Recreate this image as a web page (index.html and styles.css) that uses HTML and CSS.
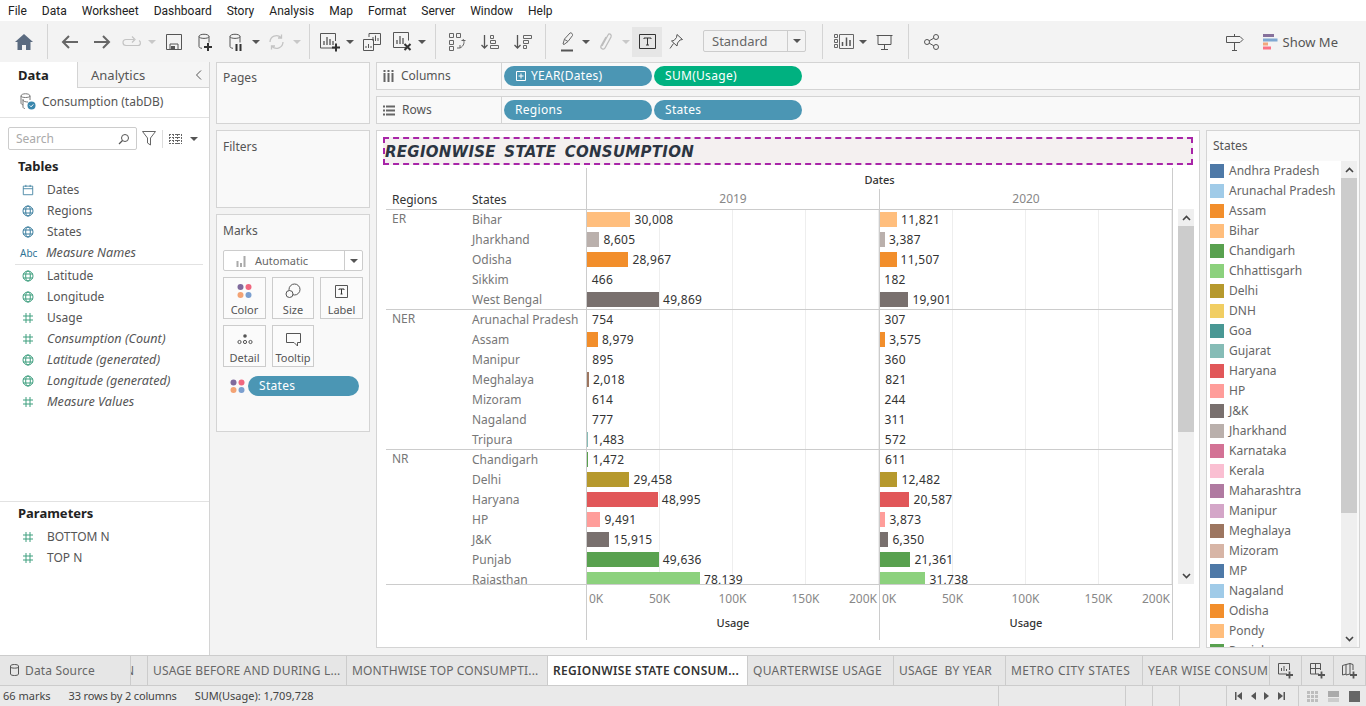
FILE: index.html
```html
<!DOCTYPE html>
<html lang="en">
<head>
  <meta charset="UTF-8">
  <title>Tableau - Regionwise State Consumption</title>
  <link rel="stylesheet" href="styles.css">
</head>
<body>
  <svg class="defs" width="0" height="0">
    <symbol id="globe" viewBox="0 0 12 12"><g fill="none" stroke="currentColor"><circle cx="6" cy="6" r="5"/><ellipse cx="6" cy="6" rx="2.3" ry="5"/><path d="M1 4h10M1 8h10"/></g></symbol>
    <symbol id="hash" viewBox="0 0 12 12"><path d="M4 1v10M8 1v10M1 4h10M1 8h10" fill="none" stroke="currentColor"/></symbol>
    <symbol id="db" viewBox="0 0 20 20"><path d="M4 4.500c0-3 10-3 10 0v6M4 4.500v10c0 1 1 1.500 3 1.800M4 4.500c0 2.500 10 2.500 10 0" fill="none" stroke="#555"/></symbol>
  </svg>

  <nav class="menubar">
    <span>File</span><span>Data</span><span>Worksheet</span><span>Dashboard</span><span>Story</span><span>Analysis</span><span>Map</span><span>Format</span><span>Server</span><span>Window</span><span>Help</span>
  </nav>

  <div class="toolbar">
    <span class="tool w32"><svg width="18" height="16" viewBox="0 0 18 16"><path d="M9 0 0 8h2.500v8h4.500v-5h4v5h4.500V8H18z" fill="#5b6b80"/></svg></span>
    <i class="sep first"></i>
    <span class="tool w32"><svg width="18" height="14" viewBox="0 0 18 14"><path d="M17 7H2M8 1 2 7l6 6" fill="none" stroke="#666" stroke-width="2"/></svg></span>
    <span class="tool w32"><svg width="18" height="14" viewBox="0 0 18 14"><path d="M1 7h15M10 1l6 6-6 6" fill="none" stroke="#666" stroke-width="2"/></svg></span>
    <span class="tool w28"><svg width="20" height="12" viewBox="0 0 20 12"><path d="M12 3.500H4c-4 0-4 6 0 6h12c3 0 3-4 1-5M10 .5l3 3-3 3" fill="none" stroke="#c4c4c4" stroke-width="1.200"/></svg></span>
    <span class="tool w12"><i class="caret light"></i></span>
    <span class="tool w32"><svg width="16" height="16" viewBox="0 0 16 16"><path d="M.5.5h15v15H.5zM4 15.500V10h8v5.500" fill="none" stroke="#555"/><rect x="5" y="12" width="4" height="3" fill="#555"/></svg></span>
    <span class="tool w30"><svg width="20" height="20" viewBox="0 0 20 20"><use href="#db"/><path d="M9 15h8M13 11v8" stroke="#333" stroke-width="2"/></svg></span>
    <span class="tool w32"><svg width="20" height="20" viewBox="0 0 20 20"><use href="#db"/><path d="M10.500 12v7M14.500 12v7" stroke="#333" stroke-width="2"/></svg></span>
    <span class="tool w8"><i class="caret"></i></span>
    <span class="tool w32"><svg width="17" height="16" viewBox="0 0 17 16"><path d="M2 8a6.500 6.500 0 0 1 11-4.500M15 8a6.500 6.500 0 0 1-11 4.500M13.500.5v3.500H10M3.500 15.500V12H7" fill="none" stroke="#c4c4c4" stroke-width="1.300"/></svg></span>
    <span class="tool w10"><i class="caret light"></i></span>
    <i class="sep"></i>
    <span class="tool w30"><svg width="22" height="20" viewBox="0 0 22 20"><path d="M15 16H.5V1.500h15V9" fill="none" stroke="#555"/><path d="M4 13V9M7 13V5M10 13V7M13 13V9" stroke="#555" stroke-width="1.300"/><path d="M12 15.500h8M16 11.500v8" stroke="#333" stroke-width="2"/></svg></span>
    <span class="tool w8"><i class="caret"></i></span>
    <span class="tool w36"><svg width="18" height="18" viewBox="0 0 18 18"><path d="M6 4V.5h11.500v11H11M.5 6.500h10v11H.5z" fill="#f3f3f3" stroke="#555"/><path d="M10 8V4M12.500 8V2.500M15 8V5M3 15v-2M5.500 15v-4M8 15v-2" stroke="#555"/></svg></span>
    <span class="tool w26"><svg width="20" height="20" viewBox="0 0 20 20"><path d="M13 15.500H.5V.5h15v8" fill="none" stroke="#555"/><path d="M4 12V8M7 12V4M10 12V6" stroke="#555" stroke-width="1.300"/><path d="m11.500 12 6 6M17.500 12l-6 6" stroke="#333" stroke-width="2"/></svg></span>
    <span class="tool w12"><i class="caret"></i></span>
    <i class="sep"></i>
    <span class="tool w30"><svg width="17" height="18" viewBox="0 0 17 18"><path d="M.5.5h4v4h-4zM7.500.5h4v4h-4zM.5 7.500h4v4h-4zM12.500 7.500h4M.5 13.500h4v4h-4z" fill="none" stroke="#666"/><path d="M14 6c2 3 1 7-3 9M8 15l3 0 0-3" fill="none" stroke="#666"/></svg></span>
    <span class="tool w36"><svg width="18" height="16" viewBox="0 0 18 16"><path d="M3.500 1v13M.5 11l3 3 3-3" fill="none" stroke="#555" stroke-width="1.300"/><path d="M9.500 1.500h3v3h-3zM9.500 6.500h5v3h-5zM9.500 11.500h8v3h-8z" fill="none" stroke="#666"/></svg></span>
    <span class="tool w30"><svg width="18" height="16" viewBox="0 0 18 16"><path d="M3.500 1v13M.5 11l3 3 3-3" fill="none" stroke="#555" stroke-width="1.300"/><path d="M9.500 1.500h8v3h-8zM9.500 6.500h5v3h-5zM9.500 11.500h3v3h-3z" fill="none" stroke="#666"/></svg></span>
    <i class="sep mid"></i>
    <span class="tool w30"><svg width="14" height="20" viewBox="0 0 14 20"><path d="m3 12 1.500-5L10 1c1-1 3 1 2.500 2.500L8 9.500l-4 3zM4.500 7.500l3.500 2" fill="none" stroke="#666"/><path d="M1 18.500h12" stroke="#555" stroke-width="2"/></svg></span>
    <span class="tool w8"><i class="caret"></i></span>
    <span class="tool w30"><svg width="15" height="19" viewBox="0 0 15 19"><path d="M4 14 10 3c1-2 4-1 3 2L7 16c-1 2-5 1-4-2L8 5" fill="none" stroke="#bdbdbd" stroke-width="1.300"/></svg></span>
    <span class="tool w12"><i class="caret light"></i></span>
    <span class="tool w30 active"><svg width="17" height="15" viewBox="0 0 17 15"><path d="M.5.5h16v14H.5z" fill="none" stroke="#333"/><path d="M5 5V4h7v1M8.500 4v7M7 11h3" fill="none" stroke="#333"/></svg></span>
    <span class="tool w28"><svg width="14" height="16" viewBox="0 0 14 16"><path d="m8 .5 5.500 5-2.500.5-2.500 3L8 12 2.500 7 5 6.500 7.500 3.500zM4.500 9.500 1 14.500" fill="none" stroke="#555"/></svg></span>
    <div class="fit-select"><span>Standard</span><b><i class="caret"></i></b></div>
    <i class="sep after-select"></i>
    <span class="tool w30"><svg width="20" height="15" viewBox="0 0 20 15"><path d="M.5.500h3v3h-3zM.5 5.500h3v3h-3zM.5 10.500h3v3h-3zM5.500.5h14v14h-14z" fill="none" stroke="#666"/><path d="M8.500 12V8M12.500 12V3.500M16 12V6" stroke="#555" stroke-width="1.500"/></svg></span>
    <span class="tool w8"><i class="caret"></i></span>
    <span class="tool w34"><svg width="17" height="16" viewBox="0 0 17 16"><path d="M.5 1.500h16M2 1.500v9h13v-9M8.500 10.500v4.500M5 15.500h7" fill="none" stroke="#555"/></svg></span>
    <i class="sep"></i>
    <span class="tool w32"><svg width="15" height="16" viewBox="0 0 15 16"><g fill="none" stroke="#555"><circle cx="3" cy="8" r="2.500"/><circle cx="12" cy="3" r="2.500"/><circle cx="12" cy="13" r="2.500"/><path d="m5.200 6.800 4.600-2.600M5.200 9.200l4.600 2.600"/></g></svg></span>
    <span class="tool push"><svg width="18" height="18" viewBox="0 0 18 18"><path d="M.5 3.500h13.500l3 3-3 3H.5zM8.500 1v2.500M8.500 9.500V17M6 17.500h5" fill="none" stroke="#555"/></svg></span>
    <div class="show-me">
      <svg width="15" height="16" viewBox="0 0 15 16"><rect width="11" height="3" fill="#86709b"/><rect y="4.500" width="14.500" height="3" fill="#7fa8d1"/><rect y="8.500" width="5" height="3" fill="#f2a67c"/><rect y="12.500" width="8" height="3" fill="#fb7285"/></svg>
      <span>Show Me</span>
    </div>
  </div>

  <div class="main">
    <aside class="side">
      <div class="side-tabs">
        <span class="side-tab current">Data</span>
        <span class="side-tab">Analytics<svg class="collapse" width="7" height="10" viewBox="0 0 7 10"><path d="M6 .5 1.500 5 6 9.500" fill="none" stroke="#555"/></svg></span>
      </div>
      <div class="source">
        <svg width="17" height="17" viewBox="0 0 17 17"><path d="M2 3c0-3 9-3 9 0v4M2 3v7c0 1 1 1.500 2 1.800M2 3c0 2 9 2 9 0M4 6v8c0 1 1 1.500 2 1.500M4 7c0 1.500 3 2 5 2" fill="none" stroke="#777"/><circle cx="12.500" cy="12.500" r="4" fill="#3a87ad"/><path d="m10.800 12.500 1.300 1.300 2.200-2.400" fill="none" stroke="#fff"/></svg>
        <span>Consumption (tabDB)</span>
      </div>
      <div class="search-row">
        <div class="search"><span>Search</span><svg width="12" height="12" viewBox="0 0 12 12"><circle cx="7" cy="5" r="3.500" fill="none" stroke="#555"/><path d="M4.500 7.500 1 11" stroke="#555" stroke-width="1.300"/></svg></div>
        <svg class="funnel" width="14" height="15" viewBox="0 0 14 15"><path d="M.5.5h13L8.500 7v7l-3-2V7z" fill="none" stroke="#666"/></svg>
        <i class="search-sep"></i>
        <svg width="13" height="10" viewBox="0 0 13 10"><path d="M0 .5h13M0 3.500h13M0 6.500h13M0 9.500h13M.5 0v10M4.500 0v10M8.500 0v10M12.500 0v10" stroke="#666" stroke-dasharray="2 1"/></svg>
        <i class="caret dark"></i>
      </div>
      <h3 class="side-head">Tables</h3>
      <ul class="fields">
        <li class="dim"><svg width="14" height="14" viewBox="0 0 14 14"><path d="M1.500 2.500h11v10h-11zM1.500 5.500h11M4.500 1v2.500M9.500 1v2.500" fill="none" stroke="#3d7f9f"/></svg>Dates</li>
        <li class="dim"><svg width="12" height="12"><use href="#globe"/></svg>Regions</li>
        <li class="dim"><svg width="12" height="12"><use href="#globe"/></svg>States</li>
        <li class="dim gen"><b class="abc">Abc</b>Measure Names</li>
      </ul>
      <ul class="fields measures">
        <li class="mea"><svg width="12" height="12"><use href="#globe"/></svg>Latitude</li>
        <li class="mea"><svg width="12" height="12"><use href="#globe"/></svg>Longitude</li>
        <li class="mea"><svg width="12" height="12"><use href="#hash"/></svg>Usage</li>
        <li class="mea gen"><svg width="12" height="12"><use href="#hash"/></svg>Consumption (Count)</li>
        <li class="mea gen"><svg width="12" height="12"><use href="#globe"/></svg>Latitude (generated)</li>
        <li class="mea gen"><svg width="12" height="12"><use href="#globe"/></svg>Longitude (generated)</li>
        <li class="mea gen"><svg width="12" height="12"><use href="#hash"/></svg>Measure Values</li>
      </ul>
      <div class="params">
        <h3 class="side-head">Parameters</h3>
        <ul class="fields">
          <li class="mea"><svg width="12" height="12"><use href="#hash"/></svg>BOTTOM N</li>
          <li class="mea"><svg width="12" height="12"><use href="#hash"/></svg>TOP N</li>
        </ul>
      </div>
    </aside>

    <section class="cards">
      <div class="card pages">Pages</div>
      <div class="card filters">Filters</div>
      <div class="card marks">
        Marks
        <div class="mark-type">
          <svg width="13" height="12" viewBox="0 0 13 12"><path d="M1.500 12V6M5 12V8M8.500 12V1" stroke="#aaa" stroke-width="2"/></svg>
          <span>Automatic</span>
          <b><i class="caret"></i></b>
        </div>
        <div class="mark-grid">
          <div class="mark-btn"><svg width="16" height="16" viewBox="0 0 16 16"><circle cx="3.500" cy="4" r="3" fill="#7f6a9c"/><circle cx="11.500" cy="4" r="3" fill="#f0677f"/><circle cx="3.500" cy="12" r="3" fill="#f3a374"/><circle cx="11.500" cy="12" r="3" fill="#7b9fcf"/></svg>Color</div>
          <div class="mark-btn"><svg width="16" height="16" viewBox="0 0 16 16"><circle cx="9.500" cy="6.500" r="5.500" fill="none" stroke="#555"/><circle cx="4.500" cy="11" r="3.500" fill="#fafafa" stroke="#555"/></svg>Size</div>
          <div class="mark-btn"><svg width="14" height="14" viewBox="0 0 14 14"><path d="M.5.5h12v12H.5z" fill="none" stroke="#555"/><path d="M4 5V4h5v1M6.500 4v5M5.500 9h2" fill="none" stroke="#333"/></svg>Label</div>
          <div class="mark-btn"><svg width="16" height="16" viewBox="0 0 16 16"><circle cx="8" cy="5" r="1.800" fill="#555"/><g fill="none" stroke="#555"><circle cx="2.500" cy="11" r="1.600"/><circle cx="8" cy="11" r="1.600"/><circle cx="13.500" cy="11" r="1.600"/></g></svg>Detail</div>
          <div class="mark-btn"><svg width="15" height="14" viewBox="0 0 15 14"><path d="M.5.5h14v9h-3v3.500L8 9.500H.5z" fill="none" stroke="#555"/></svg>Tooltip</div>
        </div>
        <div class="mark-pill">
          <svg width="15" height="15" viewBox="0 0 15 15"><circle cx="3.500" cy="3.500" r="3" fill="#7f6a9c"/><circle cx="11.500" cy="3.500" r="3" fill="#f0677f"/><circle cx="3.500" cy="11" r="3" fill="#f3a374"/><circle cx="11.500" cy="11" r="3" fill="#7b9fcf"/></svg>
          <span class="pill blue grow">States</span>
        </div>
      </div>
    </section>

    <section class="work">
      <div class="shelf">
        <div class="shelf-name"><svg width="11" height="12" viewBox="0 0 11 12"><path d="M1.500 0v12M5.500 0v12M9.500 0v12" stroke="#666" stroke-width="2" stroke-dasharray="2 1 9"/></svg>Columns</div>
        <span class="pill blue"><svg class="plus-box" width="10" height="10" viewBox="0 0 10 10"><path d="M.5.500h9v9h-9zM5 2.500v5M2.500 5h5" fill="none" stroke="#fff"/></svg>YEAR(Dates)</span>
        <span class="pill green">SUM(Usage)</span>
      </div>
      <div class="shelf">
        <div class="shelf-name"><svg width="12" height="11" viewBox="0 0 12 11"><path d="M0 1.500h2M3 1.500h9M0 5.500h2M3 5.500h9M0 9.500h2M3 9.500h9" stroke="#666" stroke-width="2"/></svg>Rows</div>
        <span class="pill blue">Regions</span>
        <span class="pill blue">States</span>
      </div>

      <div class="canvas">
        <div class="view">
          <h1 class="title">REGIONWISE STATE CONSUMPTION</h1>
          <div class="viz">
            <div class="crosstab">
              <div class="xt-head">
                <div class="xt-names"><span>Regions</span><span>States</span></div>
                <div class="xt-years">
                  <div class="xt-dates">Dates</div>
                  <div class="xt-year-row"><span>2019</span><span>2020</span></div>
                </div>
              </div>
              <div class="xt-body">
                <div class="group">
                  <div class="region">ER</div>
                  <div class="rows">
                    <div class="row"><span class="state">Bihar</span><div class="pane"><i class="bar" style="width:43.4px;background:#ffbe7d"></i>30,008</div><div class="pane"><i class="bar" style="width:17.1px;background:#ffbe7d"></i>11,821</div></div>
                    <div class="row"><span class="state">Jharkhand</span><div class="pane"><i class="bar" style="width:12.4px;background:#bab0ac"></i>8,605</div><div class="pane"><i class="bar" style="width:4.9px;background:#bab0ac"></i>3,387</div></div>
                    <div class="row"><span class="state">Odisha</span><div class="pane"><i class="bar" style="width:41.4px;background:#f28e2b"></i>28,967</div><div class="pane"><i class="bar" style="width:16.6px;background:#f28e2b"></i>11,507</div></div>
                    <div class="row"><span class="state">Sikkim</span><div class="pane"><i class="bar" style="width:.7px"></i>466</div><div class="pane"><i class="bar" style="width:.3px"></i>182</div></div>
                    <div class="row"><span class="state">West Bengal</span><div class="pane"><i class="bar" style="width:72.1px;background:#79706e"></i>49,869</div><div class="pane"><i class="bar" style="width:28.4px;background:#79706e"></i>19,901</div></div>
                  </div>
                </div>
                <div class="group">
                  <div class="region">NER</div>
                  <div class="rows">
                    <div class="row"><span class="state">Arunachal Pradesh</span><div class="pane"><i class="bar" style="width:1.1px"></i>754</div><div class="pane"><i class="bar" style="width:.4px"></i>307</div></div>
                    <div class="row"><span class="state">Assam</span><div class="pane"><i class="bar" style="width:11px;background:#f28e2b"></i>8,979</div><div class="pane"><i class="bar" style="width:5.2px;background:#f28e2b"></i>3,575</div></div>
                    <div class="row"><span class="state">Manipur</span><div class="pane"><i class="bar" style="width:1.3px"></i>895</div><div class="pane"><i class="bar" style="width:.5px"></i>360</div></div>
                    <div class="row"><span class="state">Meghalaya</span><div class="pane"><i class="bar" style="width:2px;background:#9d7660"></i>2,018</div><div class="pane"><i class="bar" style="width:1.2px"></i>821</div></div>
                    <div class="row"><span class="state">Mizoram</span><div class="pane"><i class="bar" style="width:.9px"></i>614</div><div class="pane"><i class="bar" style="width:.4px"></i>244</div></div>
                    <div class="row"><span class="state">Nagaland</span><div class="pane"><i class="bar" style="width:1.1px"></i>777</div><div class="pane"><i class="bar" style="width:.4px"></i>311</div></div>
                    <div class="row"><span class="state">Tripura</span><div class="pane"><i class="bar" style="width:1.4px;background:#86bcb6"></i>1,483</div><div class="pane"><i class="bar" style="width:.8px"></i>572</div></div>
                  </div>
                </div>
                <div class="group">
                  <div class="region">NR</div>
                  <div class="rows">
                    <div class="row"><span class="state">Chandigarh</span><div class="pane"><i class="bar" style="width:1.4px;background:#59a14f"></i>1,472</div><div class="pane"><i class="bar" style="width:.9px"></i>611</div></div>
                    <div class="row"><span class="state">Delhi</span><div class="pane"><i class="bar" style="width:42.4px;background:#b6992d"></i>29,458</div><div class="pane"><i class="bar" style="width:17.4px;background:#b6992d"></i>12,482</div></div>
                    <div class="row"><span class="state">Haryana</span><div class="pane"><i class="bar" style="width:70.8px;background:#e15759"></i>48,995</div><div class="pane"><i class="bar" style="width:29.4px;background:#e15759"></i>20,587</div></div>
                    <div class="row"><span class="state">HP</span><div class="pane"><i class="bar" style="width:13.4px;background:#ff9d9a"></i>9,491</div><div class="pane"><i class="bar" style="width:5.4px;background:#ff9d9a"></i>3,873</div></div>
                    <div class="row"><span class="state">J&amp;K</span><div class="pane"><i class="bar" style="width:22.4px;background:#79706e"></i>15,915</div><div class="pane"><i class="bar" style="width:8.4px;background:#79706e"></i>6,350</div></div>
                    <div class="row"><span class="state">Punjab</span><div class="pane"><i class="bar" style="width:71.7px;background:#59a14f"></i>49,636</div><div class="pane"><i class="bar" style="width:30.4px;background:#59a14f"></i>21,361</div></div>
                    <div class="row"><span class="state">Rajasthan</span><div class="pane"><i class="bar" style="width:112.9px;background:#8cd17d"></i>78,139</div><div class="pane"><i class="bar" style="width:45.4px;background:#8cd17d"></i>31,738</div></div>
                  </div>
                </div>
              </div>
              <div class="xt-axis">
                <div class="axis-blank"></div>
                <div class="axis"><div class="ticks"><span>0K</span><span>50K</span><span>100K</span><span>150K</span><span>200K</span></div><div class="axis-name">Usage</div></div>
                <div class="axis"><div class="ticks"><span>0K</span><span>50K</span><span>100K</span><span>150K</span><span>200K</span></div><div class="axis-name">Usage</div></div>
              </div>
            </div>
            <div class="scroll view-scroll">
              <span class="arrow"><svg width="9" height="6" viewBox="0 0 9 6"><path d="m1 5 3.500-3.500L8 5" fill="none" stroke="#444" stroke-width="1.600"/></svg></span>
              <i class="thumb"></i>
              <span class="arrow"><svg width="9" height="6" viewBox="0 0 9 6"><path d="m1 1 3.500 3.500L8 1" fill="none" stroke="#444" stroke-width="1.600"/></svg></span>
            </div>
          </div>
        </div>

        <div class="legend">
          <div class="legend-title">States</div>
          <div class="legend-body">
            <ul class="legend-list">
              <li><i style="background:#4e79a7"></i>Andhra Pradesh</li>
              <li><i style="background:#a0cbe8"></i>Arunachal Pradesh</li>
              <li><i style="background:#f28e2b"></i>Assam</li>
              <li><i style="background:#ffbe7d"></i>Bihar</li>
              <li><i style="background:#59a14f"></i>Chandigarh</li>
              <li><i style="background:#8cd17d"></i>Chhattisgarh</li>
              <li><i style="background:#b6992d"></i>Delhi</li>
              <li><i style="background:#f1ce63"></i>DNH</li>
              <li><i style="background:#499894"></i>Goa</li>
              <li><i style="background:#86bcb6"></i>Gujarat</li>
              <li><i style="background:#e15759"></i>Haryana</li>
              <li><i style="background:#ff9d9a"></i>HP</li>
              <li><i style="background:#79706e"></i>J&amp;K</li>
              <li><i style="background:#bab0ac"></i>Jharkhand</li>
              <li><i style="background:#d37295"></i>Karnataka</li>
              <li><i style="background:#fabfd2"></i>Kerala</li>
              <li><i style="background:#b07aa1"></i>Maharashtra</li>
              <li><i style="background:#d4a6c8"></i>Manipur</li>
              <li><i style="background:#9d7660"></i>Meghalaya</li>
              <li><i style="background:#d7b5a6"></i>Mizoram</li>
              <li><i style="background:#4e79a7"></i>MP</li>
              <li><i style="background:#a0cbe8"></i>Nagaland</li>
              <li><i style="background:#f28e2b"></i>Odisha</li>
              <li><i style="background:#ffbe7d"></i>Pondy</li>
              <li><i style="background:#59a14f"></i>Punjab</li>
            </ul>
            <div class="scroll legend-scroll">
              <span class="arrow"><svg width="9" height="6" viewBox="0 0 9 6"><path d="m1 5 3.500-3.500L8 5" fill="none" stroke="#444" stroke-width="1.600"/></svg></span>
              <i class="thumb"></i>
              <span class="arrow"><svg width="9" height="6" viewBox="0 0 9 6"><path d="m1 1 3.500 3.500L8 1" fill="none" stroke="#444" stroke-width="1.600"/></svg></span>
            </div>
          </div>
        </div>
      </div>
    </section>
  </div>

  <div class="tabs">
    <div class="tab t-source"><svg width="9" height="12" viewBox="0 0 9 12"><path d="M.5 2c0-2 8-2 8 0v8c0 2-8 2-8 0zM.5 3c0 1.500 8 1.500 8 0" fill="none" stroke="#555"/></svg>Data Source</div>
    <div class="tab t-cut"><span>N</span></div>
    <div class="tab t-usage">USAGE BEFORE AND DURING L...</div>
    <div class="tab t-month">MONTHWISE TOP CONSUMPTI...</div>
    <div class="tab t-region current">REGIONWISE STATE CONSUM...</div>
    <div class="tab t-quarter">QUARTERWISE USAGE</div>
    <div class="tab t-year">USAGE&nbsp; BY YEAR</div>
    <div class="tab t-metro">METRO CITY STATES</div>
    <div class="tab t-wise">YEAR WISE CONSUMPTION</div>
    <div class="tab t-new"><svg width="16" height="16" viewBox="0 0 16 16"><path d="M9 11H.5V.5h11V7" fill="none" stroke="#555"/><path d="M3.500 8V5M6 8V3M8.500 8V6" stroke="#555"/><path d="M8 12h7M11.500 8.500v7" stroke="#555" stroke-width="1.800"/></svg></div>
    <div class="tab t-new"><svg width="16" height="16" viewBox="0 0 16 16"><path d="M9 11H.5V.5h10V7M.5 5.500h10M5.500.5v10.500" fill="none" stroke="#555"/><path d="M8 12h7M11.500 8.500v7" stroke="#555" stroke-width="1.800"/></svg></div>
    <div class="tab t-new"><svg width="16" height="16" viewBox="0 0 16 16"><path d="M8 11 4 12V1.500L.5 2.500v9.500L4 11M4 1.500 8 .5l3 1V7M8 .5V11" fill="none" stroke="#555"/><path d="M8 12h7M11.500 8.500v7" stroke="#555" stroke-width="1.800"/></svg></div>
  </div>

  <footer class="status">
    <span class="stat s-marks">66 marks</span>
    <span class="stat s-rows">33 rows by 2 columns</span>
    <span class="stat s-sum">SUM(Usage): 1,709,728</span>
    <i class="cell c1"></i><i class="cell c2"></i><i class="cell c3"></i><i class="cell c4"></i>
    <div class="pager">
      <svg width="7" height="8" viewBox="0 0 7 8"><path d="M0 0h1.500v8H0zM7 0v8L2 4z" fill="#555"/></svg>
      <svg width="5" height="8" viewBox="0 0 5 8"><path d="M5 0v8L0 4z" fill="#555"/></svg>
      <svg width="5" height="8" viewBox="0 0 5 8"><path d="M0 0v8l5-4z" fill="#555"/></svg>
      <svg width="7" height="8" viewBox="0 0 7 8"><path d="M7 0H5.500v8H7zM0 0v8l5-4z" fill="#555"/></svg>
    </div>
    <div class="sizes">
      <svg width="11" height="11" viewBox="0 0 11 11"><path d="M0 1.500h11M0 5.500h11M0 9.500h11" stroke="#bdbdbd" stroke-width="3" stroke-dasharray="3 1"/></svg>
      <svg width="11" height="11" viewBox="0 0 11 11"><path d="M0 0h11v6H0z" fill="#aaa"/><path d="M0 7h11v4H0z" fill="#ccc"/></svg>
      <svg width="11" height="11" viewBox="0 0 11 11"><rect width="11" height="11" fill="#666"/></svg>
    </div>
  </footer>
</body>
</html>
```

FILE: styles.css
```css
* {
  box-sizing: border-box;
  margin: 0;
  padding: 0;
}
body {
  width: 1366px;
  height: 706px;
  overflow: hidden;
  display: flex;
  flex-direction: column;
  background: #f3f3f3;
  color: #555;
  font: 12px/16px "Noto Sans", sans-serif;
}
ul {
  list-style: none;
}
i {
  font-style: normal;
}
.defs {
  position: absolute;
}

/* menu */
.menubar {
  height: 21px;
  flex: none;
  display: flex;
  gap: 15px;
  padding: 3px 8px 0;
  background: #fff;
  color: #222;
  font-family: Roboto, sans-serif;
  font-size: 12px;
}

/* toolbar */
.toolbar {
  height: 41px;
  flex: none;
  display: flex;
  align-items: center;
  padding-left: 8px;
}
.tool {
  height: 30px;
  flex: none;
  display: flex;
  align-items: center;
  justify-content: center;
}
.w8 { width: 8px; }
.w10 { width: 10px; }
.w12 { width: 12px; }
.w26 { width: 26px; }
.w28 { width: 28px; }
.w30 { width: 30px; }
.w32 { width: 32px; }
.w34 { width: 34px; }
.w36 { width: 36px; }
.active {
  background: #e6e6e6;
}
.sep {
  width: 1px;
  height: 35px;
  flex: none;
  margin: 0 6px 0 7px;
  background: #d4d4d4;
}
.sep.after-select {
  margin-left: 16px;
}
.caret {
  display: block;
  width: 0;
  height: 0;
  border-left: 4px solid transparent;
  border-right: 4px solid transparent;
  border-top: 4px solid #555;
}
.caret.light {
  border-top-color: #c8c8c8;
}
.fit-select {
  width: 103px;
  height: 22px;
  flex: none;
  margin: -1px 0 0 13px;
  display: flex;
  align-items: center;
  border: 1px solid #ccc;
  border-radius: 2px;
  color: #666;
  font-size: 13px;
}
.fit-select span {
  flex: 1;
  padding-left: 8px;
}
.fit-select b {
  width: 18px;
  height: 100%;
  display: flex;
  align-items: center;
  justify-content: center;
  border-left: 1px solid #ccc;
}
.push {
  margin-left: auto;
  width: 20px;
}
.show-me {
  display: flex;
  align-items: center;
  gap: 5px;
  margin: 0 28px 0 18px;
  color: #555;
  font-size: 13px;
}

/* main area */
.main {
  height: 593px;
  flex: none;
  display: flex;
}
.side {
  width: 210px;
  flex: none;
  display: flex;
  flex-direction: column;
  background: #fff;
  border-right: 1px solid #d4d4d4;
}
.side-tabs {
  height: 26px;
  flex: none;
  display: flex;
  font-size: 13px;
}
.side-tab {
  flex: 1;
  display: flex;
  align-items: center;
  padding-left: 13px;
  background: #f5f5f5;
  border-bottom: 1px solid #d4d4d4;
}
.side-tab.current {
  flex: none;
  width: 78px;
  padding-left: 18px;
  background: #fff;
  border-bottom: 0;
  border-right: 1px solid #d4d4d4;
  color: #222;
  font-weight: 700;
}
.collapse {
  margin-left: auto;
  margin-right: 7px;
}
.source {
  height: 30px;
  flex: none;
  display: flex;
  align-items: center;
  gap: 6px;
  padding: 0 0 2px 19px;
  border-bottom: 1px solid #e2e2e2;
}
.search-row {
  height: 23px;
  flex: none;
  margin-top: 9px;
  display: flex;
  align-items: center;
  padding-left: 8px;
}
.search {
  width: 129px;
  height: 23px;
  display: flex;
  align-items: center;
  justify-content: space-between;
  padding: 0 6px 0 7px;
  border: 1px solid #ccc;
  border-radius: 2px;
  color: #aaa;
}
.funnel {
  margin-left: 5px;
}
.search-sep {
  width: 1px;
  height: 18px;
  margin: 0 6px;
  background: #ddd;
}
.caret.dark {
  margin-left: 8px;
}
.side-head {
  margin: 8px 0 5px 18px;
  color: #222;
  font-size: 13px;
  line-height: 16px;
  font-weight: 700;
}
.fields li {
  height: 21px;
  display: flex;
  align-items: center;
  padding-left: 22px;
}
.fields svg {
  width: 12px;
  margin-right: 13px;
  flex: none;
}
.dim svg {
  color: #3d7f9f;
}
.mea svg {
  color: #3f9f7f;
}
.gen {
  font-style: italic;
  font-size: 12.6px;
}
.abc {
  width: 17px;
  margin: 0 9px 0 -2px;
  color: #2f7396;
  font-size: 10px;
  font-style: normal;
  font-weight: 400;
}
.measures {
  margin-top: 1px;
}
.measures::before {
  content: "";
  display: block;
  height: 1px;
  margin: 0 6px 0 15px;
  background: #e2e2e2;
}
.params {
  margin-top: auto;
  height: 154px;
  border-top: 1px solid #e2e2e2;
}
.params .side-head {
  margin: 3px 0 5px 18px;
}

/* pages, filters, marks */
.cards {
  width: 154px;
  flex: none;
  margin: 0 6px;
  display: flex;
  flex-direction: column;
  gap: 6px;
}
.card {
  background: #f9f9f9;
  border: 1px solid #d4d4d4;
  padding: 8px 6px;
  color: #555;
}
.pages {
  height: 62px;
  padding-top: 7px;
}
.filters {
  height: 78px;
}
.marks {
  height: 218px;
}
.mark-type {
  height: 21px;
  margin-top: 11px;
  display: flex;
  align-items: center;
  gap: 6px;
  padding-left: 12px;
  background: #fff;
  border: 1px solid #ccc;
  border-radius: 2px;
  font-size: 11px;
  color: #666;
}
.mark-type span {
  flex: 1;
}
.mark-type b {
  width: 18px;
  height: 100%;
  display: flex;
  align-items: center;
  justify-content: center;
  border-left: 1px solid #ccc;
}
.mark-grid {
  margin-top: 6px;
  display: grid;
  grid-template-columns: 43px 42px 43px;
  grid-auto-rows: 42px;
  gap: 6px;
}
.mark-btn {
  display: flex;
  flex-direction: column;
  align-items: center;
  justify-content: flex-end;
  gap: 3px;
  padding-bottom: 1px;
  background: #fbfbfb;
  border: 1px solid #ccc;
  font-size: 11px;
  line-height: 15px;
  white-space: nowrap;
}
.mark-pill {
  margin-top: 9px;
  display: flex;
  align-items: center;
  gap: 3px;
  padding-left: 7px;
}

/* shelves */
.work {
  width: 984px;
  flex: none;
  display: flex;
  flex-direction: column;
}
.shelf {
  height: 28px;
  flex: none;
  margin-bottom: 6px;
  display: flex;
  align-items: center;
  gap: 2px;
  background: #f9f9f9;
  border: 1px solid #d4d4d4;
}
.shelf-name {
  width: 125px;
  height: 100%;
  display: flex;
  align-items: center;
  gap: 7px;
  padding-left: 6px;
  border-right: 1px solid #d4d4d4;
}
.pill {
  width: 148px;
  height: 20px;
  flex: none;
  display: flex;
  align-items: center;
  padding-left: 11px;
  border-radius: 10px;
  color: #fff;
  letter-spacing: .3px;
}
.pill.grow {
  width: 111px;
}
.blue {
  background: #4b96b4;
}
.green {
  background: #00b180;
}
.plus-box {
  margin: 0 5px 0 1px;
}

/* worksheet */
.canvas {
  height: 518px;
  flex: none;
  display: flex;
  gap: 6px;
}
.view {
  width: 824px;
  flex: none;
  padding: 6px 6px 0 6px;
  background: #fff;
  border: 1px solid #d4d4d4;
}
.title {
  height: 28px;
  background: #f4f0f0;
  border: 2px dashed #a825a8;
  color: #2c3542;
  font: italic 700 15px/26px "DejaVu Sans", sans-serif;
  letter-spacing: .27px;
  word-spacing: 3px;
}
.viz {
  display: flex;
  gap: 5px;
  margin: 3px 0 0 3px;
}
.crosstab {
  width: 787px;
  flex: none;
  border-right: 1px solid #ccc;
}
.xt-head {
  height: 42px;
  display: flex;
  border-bottom: 1px solid #ccc;
}
.xt-names {
  width: 200px;
  flex: none;
  display: flex;
  align-items: flex-end;
  padding: 0 0 1px 6px;
  color: #333;
}
.xt-names span:first-child {
  width: 80px;
}
.xt-years {
  flex: 1;
  border-left: 1px solid #ccc;
}
.xt-dates {
  height: 21px;
  padding-top: 4px;
  text-align: center;
  color: #333;
  font-size: 11px;
  font-weight: 500;
}
.xt-year-row {
  height: 20px;
  display: flex;
}
.xt-year-row span {
  flex: 1;
  padding-top: 2px;
  text-align: center;
  color: #888;
}
.xt-year-row span + span {
  border-left: 1px solid #ccc;
}
.xt-body {
  height: 375px;
  overflow: hidden;
  position: relative;
}
.xt-body::after {
  content: "";
  position: absolute;
  left: 0;
  right: 0;
  bottom: 0;
  height: 1px;
  background: #ccc;
}
.group {
  display: flex;
  border-bottom: 1px solid #ccc;
}
.region {
  width: 86px;
  flex: none;
  padding: 1px 0 0 6px;
  color: #777;
}
.row {
  height: 20px;
  display: flex;
  line-height: 20px;
}
.row:last-child {
  height: 19px;
}
.state {
  width: 114px;
  flex: none;
  color: #777;
  white-space: nowrap;
}
.pane {
  width: 293px;
  flex: none;
  display: flex;
  gap: 4px;
  color: #333;
  letter-spacing: .25px;
  border-left: 1px solid #ccc;
  background: repeating-linear-gradient(to right, transparent 0 72px, #eee 72px 73px);
}
.bar {
  display: block;
  height: 15px;
  margin-top: 2px;
  flex: none;
}
.xt-axis {
  height: 55px;
  display: flex;
}
.axis-blank {
  width: 200px;
  flex: none;
}
.axis {
  width: 293px;
  flex: none;
  border-left: 1px solid #ccc;
}
.ticks {
  display: flex;
  padding-top: 6px;
  color: #888;
}
.ticks span {
  width: 73px;
  text-align: center;
}
.ticks span:first-child {
  width: 36px;
  padding-left: 2px;
  text-align: left;
}
.ticks span:last-child {
  width: 36px;
  padding-right: 1px;
  text-align: right;
  white-space: nowrap;
}
.axis-name {
  margin-top: 8px;
  text-align: center;
  color: #333;
  font-size: 11px;
  font-weight: 500;
}
.scroll {
  width: 16px;
  flex: none;
  display: flex;
  flex-direction: column;
  background: #efefef;
}
.view-scroll {
  height: 375px;
  margin-top: 41px;
}
.arrow {
  height: 17px;
  flex: none;
  display: flex;
  align-items: center;
  justify-content: center;
}
.thumb {
  display: block;
  background: #ccc;
}
.view-scroll .thumb {
  height: 206px;
}
.scroll .arrow:last-child {
  margin-top: auto;
}

/* legend */
.legend {
  width: 154px;
  flex: none;
  background: #f9f9f9;
  border: 1px solid #d4d4d4;
}
.legend-title {
  height: 30px;
  padding: 7px 0 0 6px;
}
.legend-body {
  height: 486px;
  display: flex;
  justify-content: space-between;
  margin-right: 2px;
  background: #fff;
  overflow: hidden;
}
.legend-list {
  flex: 1;
  overflow: hidden;
}
.legend-list li {
  height: 20px;
  display: flex;
  align-items: center;
  gap: 5px;
  padding-left: 3px;
  color: #666;
  white-space: nowrap;
}
.legend-list i {
  width: 14px;
  height: 14px;
  flex: none;
}
.legend-scroll .thumb {
  height: 335px;
}

/* sheet tabs */
.tabs {
  height: 31px;
  flex: none;
  display: flex;
  background: #e6e6e6;
  border-top: 1px solid #ccc;
  border-bottom: 1px solid #ccc;
  letter-spacing: .15px;
}
.tab {
  flex: none;
  display: flex;
  align-items: center;
  overflow: hidden;
  white-space: nowrap;
  padding-left: 5px;
  color: #666;
  border-right: 1px solid #ccc;
}
.tab.current {
  background: #fff;
  color: #333;
  font-weight: 600;
  letter-spacing: .3px;
}
.t-source { width: 131px; padding-left: 10px; gap: 6px; }
.t-source svg { margin-bottom: 1px; }
.t-cut { width: 17px; padding-left: 0; }
.t-cut span { margin-left: -6px; }
.t-usage { width: 199px; }
.t-month { width: 201px; }
.t-region { width: 200px; }
.t-quarter { width: 146px; letter-spacing: .3px; }
.t-year { width: 112px; }
.t-metro { width: 137px; letter-spacing: .45px; }
.t-wise { width: 127px; letter-spacing: .3px; }
.t-new {
  width: 32px;
  padding-left: 8px;
}

/* status bar */
.status {
  height: 20px;
  flex: none;
  display: flex;
  align-items: center;
  position: relative;
  background: #eaeaea;
  color: #444;
  font-size: 11px;
}
.stat {
  margin-left: 18px;
}
.s-marks {
  margin-left: 3px;
}
.s-rows {
  letter-spacing: -.15px;
}
.s-sum {
  margin-left: 18px;
}
.cell {
  width: 1px;
  height: 100%;
  background: #ccc;
  flex: none;
}
.c1 { margin-left: auto; }
.c2 { margin-left: 126px; }
.c3 { margin-left: 26px; }
.c4 { margin-left: 26px; }
.pager {
  width: 72px;
  display: flex;
  justify-content: space-between;
  align-items: center;
  padding: 0 13px 0 8px;
  margin-left: 46px;
  border-left: 1px solid #ccc;
  height: 100%;
}
.sizes {
  width: 68px;
  display: flex;
  justify-content: space-between;
  align-items: center;
  padding: 0 6px 0 8px;
  border-left: 1px solid #ccc;
  height: 100%;
}
```
